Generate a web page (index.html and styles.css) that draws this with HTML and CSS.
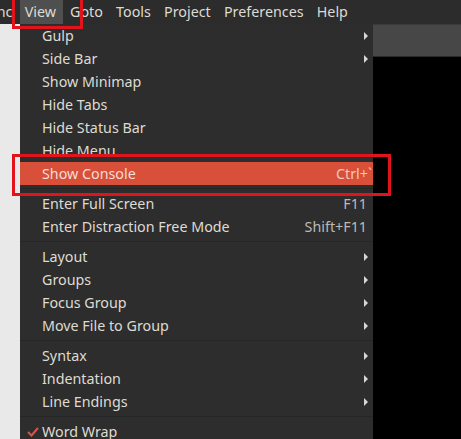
FILE: index.html
```html
<!DOCTYPE html>
<html>
<head>
<meta charset="utf-8">
<link rel="stylesheet" href="styles.css">
</head>
<body>
<div class="app">
  <nav class="menubar">
    <span class="mb-item cut">Sync</span>
    <span class="mb-item active">View</span>
    <span class="mb-item">Goto</span>
    <span class="mb-item">Tools</span>
    <span class="mb-item">Project</span>
    <span class="mb-item">Preferences</span>
    <span class="mb-item">Help</span>
  </nav>
  <div class="workspace">
    <aside class="sidebar"></aside>
    <main class="editor">
      <div class="tabbar"></div>
      <div class="code"></div>
    </main>
  </div>

  <div class="menu">
    <div class="row"><span class="label">Gulp</span><span class="arrow"></span></div>
    <div class="row"><span class="label">Side Bar</span><span class="arrow"></span></div>
    <div class="row"><span class="label">Show Minimap</span></div>
    <div class="row"><span class="label">Hide Tabs</span></div>
    <div class="row"><span class="label">Hide Status Bar</span></div>
    <div class="row"><span class="label">Hide Menu</span></div>
    <div class="row hl"><span class="label">Show Console</span><span class="key">Ctrl+`</span></div>
    <div class="sep"></div>
    <div class="row"><span class="label">Enter Full Screen</span><span class="key">F11</span></div>
    <div class="row"><span class="label">Enter Distraction Free Mode</span><span class="key">Shift+F11</span></div>
    <div class="sep"></div>
    <div class="row"><span class="label">Layout</span><span class="arrow"></span></div>
    <div class="row"><span class="label">Groups</span><span class="arrow"></span></div>
    <div class="row"><span class="label">Focus Group</span><span class="arrow"></span></div>
    <div class="row"><span class="label">Move File to Group</span><span class="arrow"></span></div>
    <div class="sep"></div>
    <div class="row"><span class="label">Syntax</span><span class="arrow"></span></div>
    <div class="row"><span class="label">Indentation</span><span class="arrow"></span></div>
    <div class="row"><span class="label">Line Endings</span><span class="arrow"></span></div>
    <div class="sep"></div>
    <div class="row checked">
      <svg class="check" width="12" height="10" viewBox="0 0 12 10"><polyline points="1,5 4.5,8.5 11,1" fill="none" stroke="#d4524a" stroke-width="2.2"/></svg>
      <span class="label">Word Wrap</span>
    </div>
  </div>

  <div class="mark mark-view"></div>
  <div class="mark mark-console"></div>
</div>
</body>
</html>
```

FILE: styles.css
```css
* { box-sizing: border-box; }
html, body { margin: 0; padding: 0; }
body {
  width: 461px;
  height: 439px;
  overflow: hidden;
  font-family: "Noto Sans", "DejaVu Sans", sans-serif;
  font-size: 14.3px;
  background: #e9e9e9;
}
.app {
  position: relative;
  width: 461px;
  height: 439px;
  display: flex;
  flex-direction: column;
}
.menubar {
  height: 24px;
  background: #2c2c2c;
  display: flex;
  align-items: stretch;
  flex: none;
}
.mb-item {
  color: #dedbd3;
  padding: 0 6.6px;
  display: flex;
  align-items: center;
  line-height: 24px;
}
.mb-item.cut {
  margin-left: -25px;
  padding-right: 8px;
}
.mb-item.active {
  background: #4f4f4f;
  padding: 0 5px 0 2px;
  width: 43px;
  justify-content: center;
}
.workspace {
  flex: 1;
  display: flex;
}
.sidebar {
  width: 200px;
  background: #e9e9e9;
}
.editor {
  flex: 1;
  display: flex;
  flex-direction: column;
}
.tabbar {
  height: 33px;
  background: #474747;
  border-top: 1px solid #3a3a3a;
  border-bottom: 1px solid #2a2a2a;
}
.code {
  flex: 1;
  background: #000;
}

.menu {
  position: absolute;
  left: 20px;
  top: 24px;
  width: 353px;
  height: 420px;
  background: #2d2d2d;
  padding-top: 0;
  color: #dedbd3;
}
.row {
  position: relative;
  height: 23px;
  display: flex;
  align-items: center;
  padding: 0 6px 0 22px;
}
.row .label { flex: 1; white-space: nowrap; }
.row .key { color: #bdbab4; }
.row.hl {
  background: #d8503a;
  color: #f3ddd6;
}
.row.hl .key { color: #f0c7bc; margin-right: -5px; }
.arrow {
  width: 0;
  height: 0;
  border-left: 4px solid #d6d6d6;
  border-top: 4px solid transparent;
  border-bottom: 4px solid transparent;
  margin-right: -1px;
}
.sep {
  height: 1px;
  margin: 3px 0;
  background: #262626;
}
.check {
  position: absolute;
  left: 7px;
  top: 7px;
}

.mark {
  position: absolute;
  border: 3px solid #e0141a;
}
.mark-view {
  left: 12px;
  top: -4px;
  width: 71px;
  height: 33px;
}
.mark-console {
  left: 12px;
  top: 154px;
  width: 379px;
  height: 42px;
}
```
